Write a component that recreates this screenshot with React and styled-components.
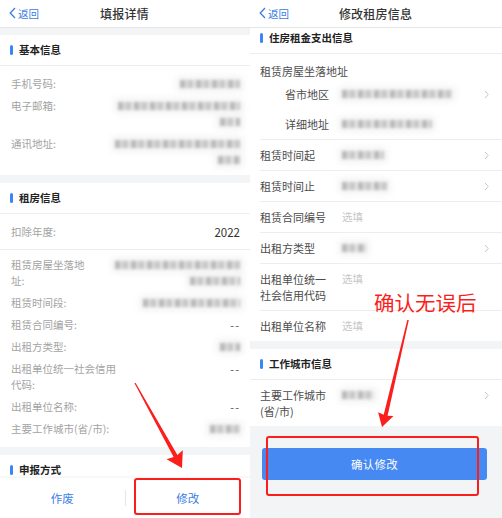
import React from "react";
import styled, { createGlobalStyle } from "styled-components";

const colors = {
  blue: "#3b7de6",
  bar: "#3a86f8",
  button: "#4689f3",
  band: "#f3f4f6",
  line: "#ededed",
  red: "#fa1f1c",
  hint: "#c6c6c6",
};

const basicRows = [
  { label: "手机号码:", blur: [60] },
  { label: "电子邮箱:", blur: [122, 20] },
  { label: "通讯地址:", blur: [125, 22] },
];

const rentRows = [
  { label: "租赁房屋坐落地址:", blur: [125, 50], lw: 76 },
  { label: "租赁时间段:", blur: [97] },
  { label: "租赁合同编号:", text: "--" },
  { label: "出租方类型:", blur: [20] },
  { label: "出租单位统一社会信用代码:", text: "--", lw: 108 },
  { label: "出租单位名称:", text: "--" },
  { label: "主要工作城市(省/市):", blur: [30] },
];

const editRows = [
  { label: "租赁时间起", blur: 42, arrow: true },
  { label: "租赁时间止", blur: 45, arrow: true },
  { label: "租赁合同编号", hint: "选填" },
  { label: "出租方类型", blur: 24, arrow: true },
  { label: "出租单位统一社会信用代码", hint: "选填" },
  { label: "出租单位名称", hint: "选填" },
];

const BackIcon = () => (
  <svg width="7" height="12" viewBox="0 0 7 12">
    <path d="M6 1 L1.2 6 L6 11" fill="none" stroke={colors.blue} strokeWidth="1.3" />
  </svg>
);

const Chevron = () => (
  <svg width="5" height="9" viewBox="0 0 5 9">
    <path d="M1 1 L4.2 4.5 L1 8" fill="none" stroke="#c4c4c4" strokeWidth="1" />
  </svg>
);

const NavBar = ({ title }) => (
  <Nav>
    <Back>
      <BackIcon />
      返回
    </Back>
    <NavTitle>{title}</NavTitle>
    <span />
  </Nav>
);

const DetailRow = ({ label, blur, text, lw }) => (
  <Row>
    <Label $lw={lw}>{label}</Label>
    <Value>
      {text
        ? text
        : blur.map((w, i) => <Blur key={i} $w={w} />)}
    </Value>
  </Row>
);

const EditRow = ({ label, blur, hint, arrow, indent }) => (
  <EditLine $indent={indent}>
    <EditLabel>{label}</EditLabel>
    <Cell>{hint ? <Hint>{hint}</Hint> : <Blur $w={blur} $inline />}</Cell>
    <Cell>{arrow && <Chevron />}</Cell>
  </EditLine>
);

export default function App() {
  return (
    <Root>
      <GlobalStyle />
      <Panel $w={250}>
        <NavBar title="填报详情" />
        <Body>
          <Section $mt={7}>
            <SectionHeader>基本信息</SectionHeader>
            <RowList $pt={10} $pb={7}>
              {basicRows.map(r => (
                <DetailRow key={r.label} {...r} />
              ))}
            </RowList>
          </Section>
          <Section $mt={8}>
            <SectionHeader>租房信息</SectionHeader>
            <YearRow>
              <Label>扣除年度:</Label>
              <Year>2022</Year>
            </YearRow>
            <RowList $pt={7} $pb={10}>
              {rentRows.map(r => (
                <DetailRow key={r.label} {...r} />
              ))}
            </RowList>
          </Section>
          <Section $mt={8}>
            <SectionHeader>申报方式</SectionHeader>
          </Section>
        </Body>
        <BottomBar>
          <BarButton>作废</BarButton>
          <BarDivider />
          <BarButton>修改</BarButton>
        </BottomBar>
      </Panel>

      <Panel $w={252}>
        <NavBar title="修改租房信息" />
        <Body>
          <Section>
            <SectionHeader $pt={2}>住房租金支出信息</SectionHeader>
            <AddressGroup>
              <GroupLabel>租赁房屋坐落地址</GroupLabel>
              <EditRow label="省市地区" blur={110} arrow indent />
              <EditRow label="详细地址" blur={90} indent />
            </AddressGroup>
            {editRows.map(r => (
              <EditRow key={r.label} {...r} />
            ))}
          </Section>
          <Section $mt={8}>
            <SectionHeader>工作城市信息</SectionHeader>
            <EditRow label="主要工作城市(省/市)" blur={32} arrow />
          </Section>
          <ConfirmButton>确认修改</ConfirmButton>
        </Body>
      </Panel>

      <Overlay width="502" height="518" viewBox="0 0 502 518">
        <polygon
          fill={colors.red}
          points="134.5,383.3 173.6,457.1 166.6,459.2 182,468 182.8,450.2 177.4,454.9 135.5,382.7"
        />
        <polygon
          fill={colors.red}
          points="407.3,319.9 383.7,414.7 378.1,412.3 382,427 393.5,416.1 387.6,415.7 408.8,320.1"
        />
      </Overlay>
      <RedBox $x={134} $y={478} $w={107} $h={37} />
      <RedBox $x={266} $y={436} $w={213} $h={60} />
      <Note>确认无误后</Note>
    </Root>
  );
}

const GlobalStyle = createGlobalStyle`
  html, body { margin: 0; padding: 0; background: #fff; }
  body { font-family: "Noto Sans CJK SC", "Noto Sans", sans-serif; }
  * { box-sizing: border-box; }
`;

const Root = styled.div`
  position: relative;
  display: flex;
  width: 502px;
  height: 518px;
  overflow: hidden;
`;

const Panel = styled.div`
  width: ${p => p.$w}px;
  height: 100%;
  display: flex;
  flex-direction: column;
  background: ${colors.band};
`;

const Nav = styled.div`
  height: 28px;
  flex-shrink: 0;
  display: grid;
  grid-template-columns: 1fr auto 1fr;
  align-items: center;
  padding: 0 10px 1px 9px;
  background: #fff;
  border-bottom: 1px solid #e6e6e6;
`;

const Back = styled.span`
  display: flex;
  align-items: center;
  gap: 2px;
  color: ${colors.blue};
  font-size: 10.5px;
`;

const NavTitle = styled.span`
  color: #333;
  font-size: 12px;
  font-weight: 500;
  letter-spacing: 0.2px;
`;

const Body = styled.div`
  flex: 1;
  overflow: hidden;
  display: flex;
  flex-direction: column;
`;

const Section = styled.div`
  margin-top: ${p => p.$mt || 0}px;
  background: #fff;
  flex-shrink: 0;
`;

const SectionHeader = styled.div`
  display: flex;
  align-items: center;
  gap: 6px;
  padding: ${p => (p.$pt != null ? p.$pt : 7)}px 10px 7px;
  line-height: 16px;
  font-size: 10.5px;
  font-weight: 700;
  color: #222;
  border-bottom: 1px solid ${colors.line};

  &::before {
    content: "";
    width: 3px;
    height: 10px;
    border-radius: 1.5px;
    background: ${colors.bar};
  }
`;

const RowList = styled.div`
  display: flex;
  flex-direction: column;
  gap: 6px;
  padding: ${p => p.$pt}px 10px ${p => p.$pb}px 11px;
`;

const Row = styled.div`
  display: flex;
  justify-content: space-between;
  align-items: flex-start;
  gap: 8px;
  line-height: 16px;
`;

const Label = styled.span`
  font-size: 10.5px;
  color: #a3a3a3;
  max-width: ${p => (p.$lw ? `${p.$lw}px` : "none")};
`;

const Value = styled.span`
  display: flex;
  flex-direction: column;
  align-items: flex-end;
  font-size: 11px;
  color: #555;
  letter-spacing: 1px;
`;

const Blur = styled.span`
  display: ${p => (p.$inline ? "inline-block" : "block")};
  width: ${p => p.$w}px;
  height: 8px;
  margin: ${p => (p.$inline ? "0" : "4px 0")};
  background: repeating-linear-gradient(
    90deg,
    #a8a8a8 0 5px,
    #d2d2d2 5px 8px,
    #b9b9b9 8px 13px,
    #e2e2e2 13px 16px
  );
  filter: blur(1.8px);
  opacity: 0.8;
  box-shadow: 0 0 6px 3px rgba(228, 228, 228, 0.7);
`;

const YearRow = styled.div`
  display: flex;
  justify-content: space-between;
  align-items: center;
  padding: 10px 10px 9px 11px;
  line-height: 16px;
  border-bottom: 1px solid ${colors.line};
`;

const Year = styled.span`
  font-size: 11.5px;
  color: #333;
`;

const BottomBar = styled.div`
  height: 40px;
  flex-shrink: 0;
  display: flex;
  align-items: center;
  background: #fff;
  box-shadow: 0 -1px 3px rgba(0, 0, 0, 0.06);
`;

const BarButton = styled.span`
  flex: 1;
  text-align: center;
  font-size: 11.5px;
  color: ${colors.blue};
`;

const BarDivider = styled.span`
  width: 1px;
  height: 16px;
  background: #e6e6e6;
`;

const AddressGroup = styled.div`
  margin-left: 10px;
  padding-top: 9px;
  border-bottom: 1px solid ${colors.line};
`;

const GroupLabel = styled.div`
  font-size: 11px;
  line-height: 16px;
  color: #4c4c4c;
`;

const EditLine = styled.div`
  display: grid;
  grid-template-columns: ${p => (p.$indent ? "45px" : "70px")} 1fr 5px;
  column-gap: 12px;
  align-items: start;
  margin-left: ${p => (p.$indent ? 0 : 10)}px;
  padding: 7px 13px 7px ${p => (p.$indent ? 25 : 0)}px;
  line-height: 16px;
  border-bottom: ${p => (p.$indent ? "none" : `1px solid ${colors.line}`)};

  &:last-child {
    border-bottom: none;
  }
`;

const EditLabel = styled.span`
  font-size: 11px;
  color: #4c4c4c;
`;

const Cell = styled.span`
  display: flex;
  align-items: center;
  height: 16px;
`;

const Hint = styled.span`
  font-size: 10.5px;
  color: ${colors.hint};
`;

const ConfirmButton = styled.div`
  margin: 22px 15px 0 12px;
  height: 32px;
  flex-shrink: 0;
  display: flex;
  align-items: center;
  justify-content: center;
  border-radius: 3px;
  background: ${colors.button};
  color: #fff;
  font-size: 11.5px;
  letter-spacing: 0.3px;
`;

const Overlay = styled.svg`
  position: absolute;
  left: 0;
  top: 0;
  pointer-events: none;
`;

const RedBox = styled.div`
  position: absolute;
  left: ${p => p.$x}px;
  top: ${p => p.$y}px;
  width: ${p => p.$w}px;
  height: ${p => p.$h}px;
  border: 2px solid ${colors.red};
  border-radius: 3px;
`;

const Note = styled.div`
  position: absolute;
  left: 374px;
  top: 290px;
  font-size: 20.5px;
  line-height: 24px;
  color: ${colors.red};
`;
